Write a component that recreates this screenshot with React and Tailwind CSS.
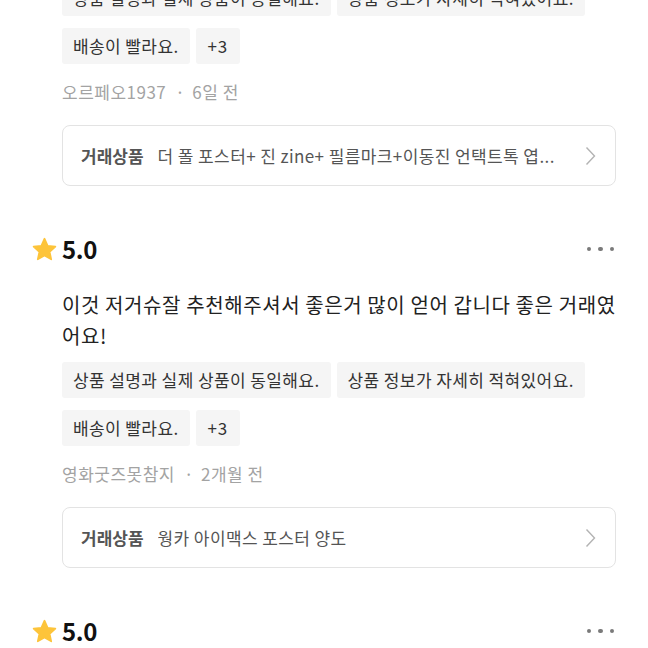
const REVIEWS = [
  {
    score: '5.0',
    text: '배송도 빠르고 상품 상태도 아주 좋았습니다 친절하게 응대해주셔서 감사합니다',
    tags: ['상품 설명과 실제 상품이 동일해요.', '상품 정보가 자세히 적혀있어요.', '배송이 빨라요.'],
    more: 3,
    user: '오르페오1937',
    when: '6일 전',
    product: '더 폴 포스터+ 진 zine+ 필름마크+이동진 언택트톡 엽...',
  },
  {
    score: '5.0',
    text: '이것 저거슈잘 추천해주셔서 좋은거 많이 얻어 갑니다 좋은 거래였어요!',
    tags: ['상품 설명과 실제 상품이 동일해요.', '상품 정보가 자세히 적혀있어요.', '배송이 빨라요.'],
    more: 3,
    user: '영화굿즈못참지',
    when: '2개월 전',
    product: '웡카 아이맥스 포스터 양도',
  },
  {
    score: '5.0',
    text: '좋은 물건 감사합니다 다음에도 또 거래하고 싶어요 번창하세요',
    tags: ['상품 설명과 실제 상품이 동일해요.', '배송이 빨라요.'],
    more: 2,
    user: '포스터수집가',
    when: '3개월 전',
    product: '듄 파트2 오리지널 티켓 포스터',
  },
]

function Star() {
  return (
    <svg width="25" height="25" viewBox="0 0 24 24">
      <path
        d="M12 1.6L15.06 8.39 22.46 9.2 16.95 14.21 18.47 21.5 12 17.8 5.53 21.5 7.05 14.21 1.54 9.2 8.94 8.39Z"
        fill="#FDC43A"
        stroke="#FDC43A"
        strokeWidth="1.6"
        strokeLinejoin="round"
      />
    </svg>
  )
}

function Chevron() {
  return (
    <svg width="11" height="20" viewBox="0 0 11 20" className="shrink-0">
      <polyline points="1.5,1.5 9.5,10 1.5,18.5" fill="none" stroke="#b3b3b3" strokeWidth="1.4" />
    </svg>
  )
}

function Review({ review }) {
  return (
    <div className="pb-[47px]">
      {/* Header */}
      <div className="h-8 flex items-center justify-between">
        <div className="flex items-center">
          <div className="w-[30px] flex items-center">
            <Star />
          </div>
          <span className="text-[24px] font-bold text-[#111] tracking-[-0.3px]">{review.score}</span>
        </div>
        <div className="flex items-center gap-[7px] pr-[2px]">
          <span className="w-[4.5px] h-[4.5px] rounded-full bg-[#7a7a7a]" />
          <span className="w-[4.5px] h-[4.5px] rounded-full bg-[#7a7a7a]" />
          <span className="w-[4.5px] h-[4.5px] rounded-full bg-[#7a7a7a]" />
        </div>
      </div>

      {/* Body */}
      <div className="pl-[30px]">
        <p className="mt-6 text-[20px] leading-[31px] tracking-[0.6px] text-[#222] h-[62px]">{review.text}</p>

        <div className="mt-[11px] flex flex-wrap gap-x-1.5 gap-y-3">
          {review.tags.map((t) => (
            <span key={t} className="h-9 px-[11px] flex items-center bg-[#f5f5f5] rounded-[3px] text-[17px] tracking-[0.4px] text-[#333]">
              {t}
            </span>
          ))}
          <span className="h-9 px-[12px] flex items-center bg-[#f5f5f5] rounded-[3px] text-[17px] tracking-[0.8px] text-[#333]">
            +{review.more}
          </span>
        </div>

        <div className="mt-4 leading-6 text-[17px] tracking-[0.5px] text-[#a3a3a3] flex items-center">
          <span>{review.user}</span>
          <span className="ml-[9px] mr-[7px]">·</span>
          <span>{review.when}</span>
        </div>

        <div className="mt-[21px] h-[61px] border border-[#e3e3e3] rounded-lg pl-[18px] pr-[19px] flex items-center">
          <span className="text-[17px] font-semibold text-[#555] shrink-0">거래상품</span>
          <span className="ml-[14px] flex-1 min-w-0 truncate text-[17px] tracking-[0.4px] text-[#555]">{review.product}</span>
          <span className="ml-[18px]">
            <Chevron />
          </span>
        </div>
      </div>
    </div>
  )
}

export default function App() {
  return (
    <div
      className="h-screen overflow-hidden bg-white"
      style={{ fontFamily: '"Noto Sans CJK KR", "Noto Sans", sans-serif' }}
    >
      <div className="-mt-[149px] px-8">
        {REVIEWS.map((r, i) => (
          <Review key={i} review={r} />
        ))}
      </div>
    </div>
  )
}
